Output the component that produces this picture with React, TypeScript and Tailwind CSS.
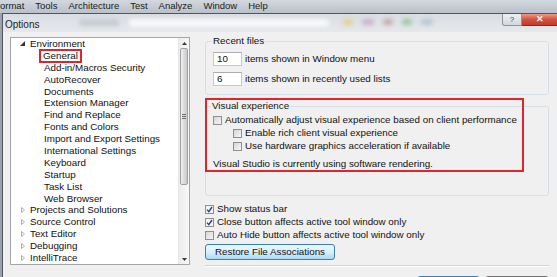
const font = "font-['Liberation_Sans',Arial,sans-serif]";

type TreeItem = { label: string; level: 0 | 1; expanded?: boolean; selected?: boolean };

const tree: TreeItem[] = [
  { label: "Environment", level: 0, expanded: true },
  { label: "General", level: 1, selected: true },
  { label: "Add-in/Macros Security", level: 1 },
  { label: "AutoRecover", level: 1 },
  { label: "Documents", level: 1 },
  { label: "Extension Manager", level: 1 },
  { label: "Find and Replace", level: 1 },
  { label: "Fonts and Colors", level: 1 },
  { label: "Import and Export Settings", level: 1 },
  { label: "International Settings", level: 1 },
  { label: "Keyboard", level: 1 },
  { label: "Startup", level: 1 },
  { label: "Task List", level: 1 },
  { label: "Web Browser", level: 1 },
  { label: "Projects and Solutions", level: 0 },
  { label: "Source Control", level: 0 },
  { label: "Text Editor", level: 0 },
  { label: "Debugging", level: 0 },
  { label: "IntelliTrace", level: 0 },
];

const menu = ["ormat", "Tools", "Architecture", "Test", "Analyze", "Window", "Help"];

function Check({ checked }: { checked?: boolean }) {
  return (
    <span
      className={`flex h-[9px] w-[9px] shrink-0 items-center justify-center border border-[#8f8f8f] ${
        checked ? "bg-[#f4f4f4]" : "bg-gradient-to-br from-[#d6d6d6] to-[#f6f6f6]"
      }`}
    >
      {checked && (
        <svg width="7" height="7" viewBox="0 0 7 7">
          <path d="M1 3.6 L2.8 5.6 L6 1" fill="none" stroke="#24409a" strokeWidth="1.4" />
        </svg>
      )}
    </span>
  );
}

function CheckRow({ label, checked, indent }: { label: string; checked?: boolean; indent?: boolean }) {
  return (
    <div className={`flex h-[13px] items-center gap-[3px] ${indent ? "pl-[20px]" : ""}`}>
      <Check checked={checked} />
      <span>{label}</span>
    </div>
  );
}

function NumBox({ value }: { value: string }) {
  return (
    <div className="flex h-[14px] w-[29px] items-center border border-[#c5cad0] border-t-[#abadb3] bg-white pl-[3px]">
      {value}
    </div>
  );
}

export default function App() {
  return (
    <div className={`relative flex h-[277px] w-[557px] flex-col overflow-hidden bg-[#9aa3ad] text-[9.8px] text-[#111] ${font}`}>
      {/* menu bar */}
      <div className="flex h-[13px] shrink-0 items-center gap-[11px] bg-gradient-to-b from-[#d3d8de] to-[#b9c0c8] text-[9.5px] text-[#1c1c1c]">
        {menu.map((m) => (
          <span key={m}>{m}</span>
        ))}
      </div>

      {/* dialog */}
      <div className="ml-[2px] flex flex-1 flex-col border-l border-t border-[#4f565e] bg-[#f0f0f0]">
        {/* title bar */}
        <div className="flex h-[18px] shrink-0 items-start bg-gradient-to-b from-[#d9dde2] to-[#e6e8eb]">
          <span className="ml-[2px] mt-[3px] text-[10px] text-[#222]">Options</span>
          <div className="ml-[40px] mt-[5px] h-[7px] w-[40px] rounded-full bg-[#c6ccd2] blur-[2px]" />
          <div className="ml-[10px] mt-[5px] h-[8px] w-[200px] rounded-sm bg-[#f7f8f9] blur-[2px]" />
          <div className="ml-[14px] mt-[5px] flex gap-[9px]">
            <span className="h-[6px] w-[10px] rounded-full bg-[#e4d08a] blur-[2px]" />
            <span className="h-[6px] w-[12px] rounded-full bg-[#c9b1cc] blur-[2px]" />
            <span className="h-[6px] w-[10px] rounded-full bg-[#c9a7ad] blur-[2px]" />
            <span className="h-[6px] w-[10px] rounded-full bg-[#9ec79c] blur-[2px]" />
            <span className="h-[6px] w-[12px] rounded-full bg-[#b8c6d6] blur-[2px]" />
          </div>
          <div className="ml-auto flex h-[12px]">
            <div className="flex w-[20px] items-center justify-center rounded-bl-[3px] border border-t-0 border-[#8c939b] bg-gradient-to-b from-[#eef0f2] to-[#d3d8de] text-[8px] text-[#444]">
              ?
            </div>
            <div className="flex w-[35px] items-center justify-center border-b border-[#8a2a22] bg-gradient-to-b from-[#e79a8a] via-[#d4503f] to-[#c23a2b] text-[9px] font-bold text-white">
              ✕
            </div>
          </div>
        </div>

        {/* body */}
        <div className="flex flex-1 pt-[5px]">
          {/* tree */}
          <div className="ml-[7px] flex h-[228px] w-[180px] shrink-0 border border-[#a3a6ab] bg-white">
            <div className="flex-1">
              {tree.map((t) => (
                <div key={t.label} className="flex h-[11.9px] items-center leading-[12px]">
                  {t.level === 0 ? (
                    <>
                      <span className="flex w-[19px] justify-end pr-[5px]">
                        {t.expanded ? (
                          <svg width="5" height="5" viewBox="0 0 5 5">
                            <path d="M5 0 L5 5 L0 5 Z" fill="#333" />
                          </svg>
                        ) : (
                          <svg width="4" height="6" viewBox="0 0 4 6">
                            <path d="M0.5 0.5 L3.5 3 L0.5 5.5 Z" fill="none" stroke="#9a9a9a" strokeWidth="0.8" />
                          </svg>
                        )}
                      </span>
                      <span>{t.label}</span>
                    </>
                  ) : t.selected ? (
                    <span className="ml-[28px] -my-[1px] border-2 border-[#e0242c] px-[2px] leading-[10px]">
                      {t.label}
                    </span>
                  ) : (
                    <span className="ml-[33px]">{t.label}</span>
                  )}
                </div>
              ))}
            </div>
            {/* scrollbar */}
            <div className="flex w-[11px] flex-col border-l border-[#e6e6e6] bg-gradient-to-r from-[#ececec] to-[#f8f8f8]">
              <div className="flex h-[10px] items-center justify-center">
                <svg width="5" height="3" viewBox="0 0 5 3">
                  <path d="M0 3 L2.5 0 L5 3 Z" fill="#3a3a3a" />
                </svg>
              </div>
              <div className="mx-[1px] flex h-[137px] items-center justify-center rounded-[2px] border border-[#9da1a6] bg-gradient-to-r from-[#f0f0f0] via-[#dcdcdc] to-[#c9c9c9]">
                <div className="flex flex-col gap-[1px]">
                  <span className="h-px w-[4px] bg-[#6e6e6e]" />
                  <span className="h-px w-[4px] bg-[#6e6e6e]" />
                  <span className="h-px w-[4px] bg-[#6e6e6e]" />
                </div>
              </div>
              <div className="mt-auto flex h-[10px] items-center justify-center">
                <svg width="5" height="3" viewBox="0 0 5 3">
                  <path d="M0 0 L5 0 L2.5 3 Z" fill="#3a3a3a" />
                </svg>
              </div>
            </div>
          </div>

          {/* right panel */}
          <div className="relative ml-[15px] mr-[8px] flex flex-1 flex-col">
            <fieldset className="-mt-[2px] h-[60px] rounded-[3px] border border-[#d5dfe5] px-[7px]">
              <legend className="ml-[-1px] px-[1px] leading-[12px]">Recent files</legend>
              <div className="mt-[5px] flex items-center gap-[3px]">
                <NumBox value="10" />
                <span>items shown in Window menu</span>
              </div>
              <div className="mt-[5px] flex items-center gap-[3px]">
                <NumBox value="6" />
                <span>items shown in recently used lists</span>
              </div>
            </fieldset>

            <fieldset className="mt-[5px] h-[96px] rounded-[3px] border border-[#d5dfe5] px-[7px]">
              <legend className="ml-[-2px] px-[1px] leading-[12px]">Visual experience</legend>
              <div className="mt-[2px]">
                <CheckRow label="Automatically adjust visual experience based on client performance" />
                <CheckRow indent label="Enable rich client visual experience" />
                <CheckRow indent label="Use hardware graphics acceleration if available" />
              </div>
              <div className="mt-[5px] leading-[12px]">Visual Studio is currently using software rendering.</div>
            </fieldset>

            <div className="mt-[7px]">
              <CheckRow checked label="Show status bar" />
              <CheckRow checked label="Close button affects active tool window only" />
              <CheckRow label="Auto Hide button affects active tool window only" />
            </div>

            <button className="mt-[2px] flex h-[16px] w-[130px] items-center justify-center rounded-[3px] border border-[#3c7fb1] bg-gradient-to-b from-[#eaf6fd] via-[#d9f0fc] to-[#a7d9f5] text-[#111]">
              Restore File Associations
            </button>

            <div className="mt-[5px] border-t border-[#d5d5d5] border-b border-b-white" />

            <div className="mt-[9px] flex justify-end gap-[5px]">
              <div className="h-[20px] w-[63px] rounded-[3px] border border-[#3c7fb1] bg-gradient-to-b from-[#7fd0f5] to-[#3fb2e8]" />
              <div className="h-[20px] w-[64px] rounded-[3px] border border-[#707070] bg-gradient-to-b from-[#f2f2f2] to-[#dcdcdc]" />
            </div>

            {/* highlight overlay */}
            <div className="pointer-events-none absolute left-0 top-[61px] h-[74px] w-[319px] border-2 border-[#e0242c]" />
          </div>
        </div>
      </div>
    </div>
  );
}
